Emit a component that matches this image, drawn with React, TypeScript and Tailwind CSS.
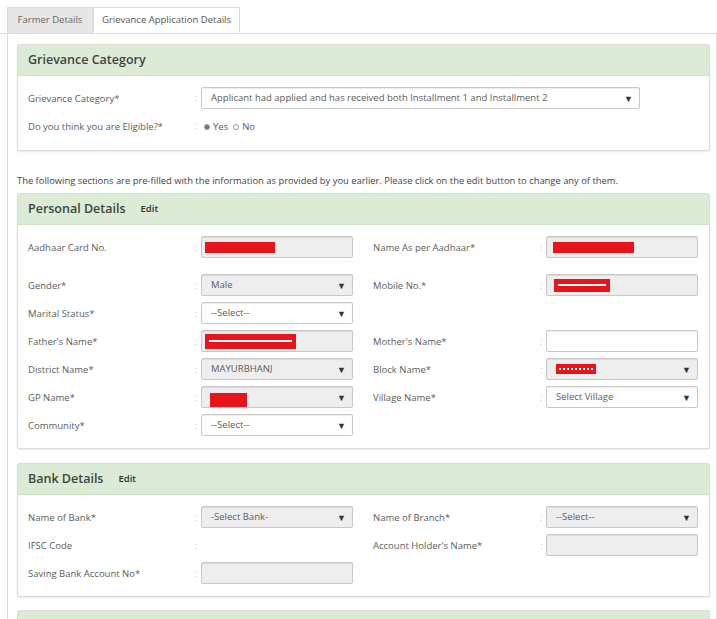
import type { ReactNode } from "react";

const Caret = () => <span className="text-[9px] leading-none text-[#333]">▼</span>;

const Box = ({ disabled, children, w = "w-[152px]" }: { disabled?: boolean; children?: ReactNode; w?: string }) => (
  <div
    className={`${w} h-[22px] flex items-center px-[3px] border border-[#c8c8c8] rounded-[2px] shadow-[inset_0_1px_1px_rgba(0,0,0,0.08)] ${
      disabled ? "bg-[#eeeeee]" : "bg-white"
    }`}
  >
    {children}
  </div>
);

const Select = ({ value, disabled, w }: { value?: ReactNode; disabled?: boolean; w?: string }) => (
  <Box disabled={disabled} w={w}>
    <div className="flex-1 pl-[6px] text-[9.5px] text-[#5c5c5c] truncate">{value}</div>
    <Caret />
    <span className="w-[3px]" />
  </Box>
);

const Field = ({ label, children }: { label?: string; children?: ReactNode }) => (
  <div className="flex items-center h-[28px]">
    <div className="w-[167px] pt-[3px] text-[9.5px] text-[#5c5c5c]">{label}</div>
    <div className="w-[6px] pt-[1px] text-[9px] text-[#c4c4c4]">{label ? ":" : ""}</div>
    <div>{children}</div>
  </div>
);

const Row = ({ left, right, extra }: { left: ReactNode; right?: ReactNode; extra?: boolean }) => (
  <div className={`flex ${extra ? "mb-[10px]" : ""}`}>
    <div className="w-[345px]">{left}</div>
    <div className="w-[325px]">{right}</div>
  </div>
);

const Section = ({ title, edit, pb = "pb-[10px]", children }: { title: string; edit?: boolean; pb?: string; children?: ReactNode }) => (
  <div className="border border-[#dcdcdc] rounded-[2px] bg-white shadow-[0_1px_2px_rgba(0,0,0,0.08)]">
    <div className="h-[31px] bg-[#dcebd5] border-b border-[#cfe3c6] flex items-center pl-[10px]">
      <span className="text-[12.5px] font-semibold text-[#3d453d]">{title}</span>
      {edit && <span className="ml-[15px] text-[9.5px] font-semibold text-[#333]">Edit</span>}
    </div>
    <div className={`pl-[10px] pt-[8px] ${pb}`}>{children}</div>
  </div>
);

export default function App() {
  return (
    <div className="w-[717px] h-[619px] overflow-hidden bg-white [font-family:'Open_Sans','Noto_Sans',sans-serif]">
      <div className="pt-[7px] pl-[7px] flex border-b border-[#dddddd]">
        <div className="w-[86px] h-[26px] bg-[#e6e6e6] flex items-center justify-center text-[9.5px] text-[#666] border border-[#dddddd] border-b-0">
          Farmer Details
        </div>
        <div className="w-[147px] h-[26px] -mb-px bg-white flex items-center justify-center text-[9.5px] text-[#555] border border-[#dddddd] border-b-white">
          Grievance Application Details
        </div>
      </div>
      <div className="ml-[7px] border-l border-r border-[#dddddd] pl-[9px] pr-[6px] pt-[10px] h-[600px]">
        <Section title="Grievance Category">
          <div className="flex items-center h-[28px]">
            <div className="w-[167px] pt-[3px] text-[9.5px] text-[#5c5c5c]">Grievance Category*</div>
            <div className="w-[6px] text-[9px] text-[#c4c4c4]">:</div>
            <Select w="w-[439px]" value="Applicant had applied and has received both Installment 1 and Installment 2" />
          </div>
          <div className="flex items-center h-[28px]">
            <div className="w-[167px] pt-[3px] text-[9.5px] text-[#5c5c5c]">Do you think you are Eligible?*</div>
            <div className="w-[6px] text-[9px] text-[#c4c4c4]">:</div>
            <div className="flex items-center pt-[2px] text-[9.5px] text-[#5c5c5c]">
              <span className="w-[6px] h-[6px] rounded-full bg-[#777] border border-[#999] ml-[3px] mr-[3px]" />
              Yes
              <span className="w-[6px] h-[6px] rounded-full bg-white border border-[#999] ml-[5px] mr-[3px]" />
              No
            </div>
          </div>
        </Section>

        <div className="mt-[23px] mb-[5px] h-[14px] text-[9.4px] text-[#444] whitespace-nowrap">
          The following sections are pre-filled with the information as provided by you earlier. Please click on the edit button to change any of them.
        </div>

        <Section title="Personal Details" edit pb="pb-[9px]">
          <Row
            extra
            left={
              <Field label="Aadhaar Card No.">
                <Box disabled>
                  <div className="w-[70px] h-[11px] bg-[#e8141c]" />
                </Box>
              </Field>
            }
            right={
              <Field label="Name As per Aadhaar*">
                <Box disabled>
                  <div className="pl-[3px]">
                    <div className="w-[81px] h-[11px] bg-[#e8141c]" />
                  </div>
                </Box>
              </Field>
            }
          />
          <Row
            left={
              <Field label="Gender*">
                <Select disabled value="Male" />
              </Field>
            }
            right={
              <Field label="Mobile No.*">
                <Box disabled>
                  <div className="pl-[4px]">
                    <div className="w-[56px] h-[13px] bg-[#e8141c] flex items-center px-[4px]">
                      <div className="h-[2px] w-full bg-white" />
                    </div>
                  </div>
                </Box>
              </Field>
            }
          />
          <Row
            left={
              <Field label="Marital Status*">
                <Select value="--Select--" />
              </Field>
            }
          />
          <Row
            left={
              <Field label="Father's Name*">
                <Box disabled>
                  <div className="w-[91px] h-[15px] bg-[#e8141c] flex items-center px-[4px]">
                    <div className="h-[2px] w-full bg-white" />
                  </div>
                </Box>
              </Field>
            }
            right={
              <Field label="Mother's Name*">
                <Box />
              </Field>
            }
          />
          <Row
            left={
              <Field label="District Name*">
                <Select disabled value="MAYURBHANJ" />
              </Field>
            }
            right={
              <Field label="Block Name*">
                <Box disabled>
                  <div className="flex-1 pl-[6px]">
                    <div className="w-[40px] h-[10px] bg-[#e8141c] flex items-center px-[3px]">
                      <div className="w-full border-t-2 border-dotted border-white" />
                    </div>
                  </div>
                  <Caret />
                  <span className="w-[3px]" />
                </Box>
              </Field>
            }
          />
          <Row
            left={
              <Field label="GP Name*">
                <Box disabled>
                  <div className="flex-1 pl-[5px] self-end">
                    <div className="w-[37px] h-[14px] bg-[#e8141c]" />
                  </div>
                  <Caret />
                  <span className="w-[3px]" />
                </Box>
              </Field>
            }
            right={
              <Field label="Village Name*">
                <Select value="Select Village" />
              </Field>
            }
          />
          <Row
            left={
              <Field label="Community*">
                <Select value="--Select--" />
              </Field>
            }
          />
        </Section>

        <div className="h-[14px]" />

        <Section title="Bank Details" edit pb="pb-[9px]">
          <Row
            left={
              <Field label="Name of Bank*">
                <Select disabled value="-Select Bank-" />
              </Field>
            }
            right={
              <Field label="Name of Branch*">
                <Select disabled value="--Select--" />
              </Field>
            }
          />
          <Row
            left={<Field label="IFSC Code" />}
            right={
              <Field label="Account Holder's Name*">
                <Box disabled />
              </Field>
            }
          />
          <Row
            left={
              <Field label="Saving Bank Account No*">
                <Box disabled />
              </Field>
            }
          />
        </Section>

        <div className="h-[13px]" />
        <div className="border border-[#dcdcdc] rounded-[2px]">
          <div className="h-[31px] bg-[#dcebd5]" />
        </div>
      </div>
    </div>
  );
}
